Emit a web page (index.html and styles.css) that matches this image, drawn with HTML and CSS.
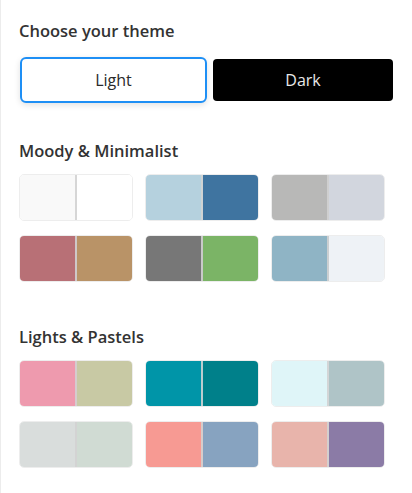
FILE: index.html
```html
<!DOCTYPE html>
<html>
<head>
<meta charset="utf-8">
<link rel="stylesheet" href="styles.css">
</head>
<body>
<div class="panel">
  <h2 class="title">Choose your theme</h2>
  <div class="modes">
    <button class="mode light">Light</button>
    <button class="mode dark">Dark</button>
  </div>

  <h2 class="title section">Moody &amp; Minimalist</h2>
  <div class="grid">
    <div class="sw"><span style="background:#f9f9f9"></span><span style="background:#ffffff"></span></div>
    <div class="sw"><span style="background:#b5d1de"></span><span style="background:#3f74a0"></span></div>
    <div class="sw"><span style="background:#b8b8b7"></span><span style="background:#d2d6de"></span></div>
    <div class="sw"><span style="background:#b87076"></span><span style="background:#b99367"></span></div>
    <div class="sw"><span style="background:#777777"></span><span style="background:#7bb466"></span></div>
    <div class="sw"><span style="background:#8fb4c5"></span><span style="background:#eef2f6"></span></div>
  </div>

  <h2 class="title section2">Lights &amp; Pastels</h2>
  <div class="grid">
    <div class="sw"><span style="background:#ee9aae"></span><span style="background:#c8c9a4"></span></div>
    <div class="sw"><span style="background:#0095a8"></span><span style="background:#00808a"></span></div>
    <div class="sw"><span style="background:#dff5f8"></span><span style="background:#afc4c7"></span></div>
    <div class="sw"><span style="background:#d9dddc"></span><span style="background:#d0dbd3"></span></div>
    <div class="sw"><span style="background:#f79a93"></span><span style="background:#87a3c0"></span></div>
    <div class="sw"><span style="background:#e8b4ab"></span><span style="background:#8b7ba6"></span></div>
  </div>
</div>
</body>
</html>
```
FILE: styles.css
```css
html, body {
  margin: 0;
  padding: 0;
  background: #fff;
}
body {
  font-family: "Open Sans", Lato, sans-serif;
  color: #333;
}
.panel {
  border-left: 1px solid #ececec;
  min-height: 493px;
  box-sizing: border-box;
  padding: 20px 0 0 18px;
}
.title {
  margin: 0;
  font-size: 16.5px;
  font-weight: 600;
  line-height: 22px;
  color: #333;
}
.modes {
  display: flex;
  align-items: center;
  gap: 6px;
  margin-top: 15px;
  margin-left: 1px;
}
.mode {
  font-family: inherit;
  font-size: 16px;
  border-radius: 6px;
  padding: 0;
  cursor: pointer;
}
.light {
  width: 187px;
  height: 46px;
  background: #fff;
  color: #2a2a2a;
  border: 2px solid #1e8ff5;
  box-shadow: 0 2px 6px rgba(0,0,0,0.12);
}
.dark {
  width: 180px;
  height: 42px;
  background: #000;
  color: #e8e8e8;
  border: none;
  border-radius: 4px;
}
.section { margin-top: 37px; }
.section2 { margin-top: 44px; }
.grid {
  display: grid;
  grid-template-columns: repeat(3, 114px);
  column-gap: 12px;
  row-gap: 14px;
  margin-top: 12px;
}
.sw {
  display: flex;
  height: 47px;
  border-radius: 5px;
  overflow: hidden;
  border: 1px solid rgba(0,0,0,0.07);
  box-sizing: border-box;
}
.sw span {
  flex: 1;
}
.sw span:first-child {
  border-right: 2px solid rgba(210,210,210,0.9);
}
```
